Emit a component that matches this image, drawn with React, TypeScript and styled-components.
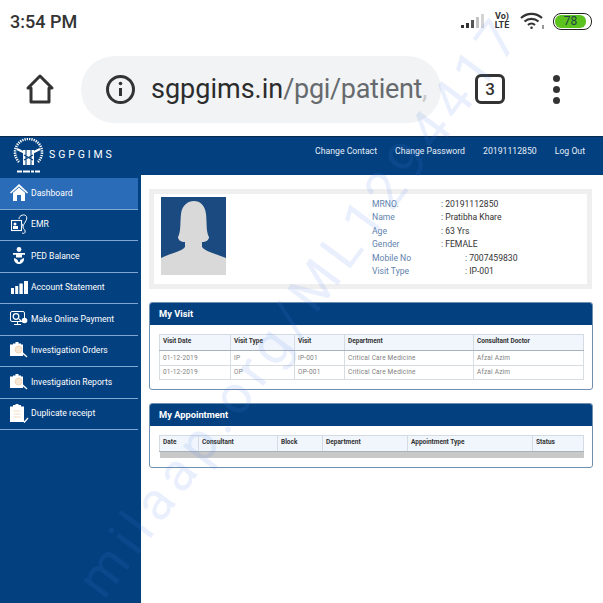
import styled, { createGlobalStyle } from "styled-components";

const navy = "#03407f";

const GlobalStyle = createGlobalStyle`
    html, body {
        margin: 0;
        padding: 0;
        background: #fff;
    }
    * {
        box-sizing: border-box;
    }
`;

const visitRows = [
    ["01-12-2019", "IP", "IP-001", "Critical Care Medicine", "Afzal Azim"],
    ["01-12-2019", "OP", "OP-001", "Critical Care Medicine", "Afzal Azim"],
];

const profile = [
    { label: "MRNO.", value: ": 20191112850", far: false },
    { label: "Name", value: ": Pratibha Khare", far: false },
    { label: "Age", value: ": 63 Yrs", far: false },
    { label: "Gender", value: ": FEMALE", far: false },
    { label: "Mobile No", value: ": 7007459830", far: true },
    { label: "Visit Type", value: ": IP-001", far: true },
];

const HomeIcon = () => (
    <svg width="18" height="17" viewBox="0 0 18 17">
        <path d="M9 0 L18 8.500 L17 9.500 L9 2.500 L1 9.500 L0 8.500 Z" fill="#fff" />
        <path d="M9 3.500 L15 8.800 V17 H11 V11 H7 V17 H3 V8.800 Z" fill="#fff" />
    </svg>
);
const EmrIcon = () => (
    <svg width="17" height="20" viewBox="0 0 17 20" fill="none" stroke="#fff">
        <rect x="0.500" y="6.500" width="10" height="10" strokeWidth="1.100" />
        <circle cx="4" cy="10" r="1.500" fill="#fff" stroke="none" />
        <rect x="2" y="12" width="5" height="3" fill="#fff" stroke="none" />
        <path d="M8 5C8 1 14-.5 15.500 2.500 17 6 12 10 12 13c0 2 3 3 2 5.500-.5 1-2 1-3 .5" strokeWidth="1" />
        <circle cx="11" cy="11" r="1.200" fill="#cfe0f4" stroke="none" />
    </svg>
);
const BabyIcon = () => (
    <svg width="12" height="17" viewBox="0 0 12 17" fill="#fff">
        <circle cx="6" cy="2.500" r="2.400" />
        <path d="M0 6h12v1.800H9V10.500H3V7.800H0z" />
        <path d="M1 11l2.300 1c.5 1.300 4.900 1.300 5.400 0l2.300-1c.4 3.500-2 6-5 6s-5.400-2.500-5-6z" />
        <circle cx="6" cy="13.800" r="1.200" fill="#03407f" />
    </svg>
);
const BarsIcon = () => (
    <svg width="17" height="13" viewBox="0 0 17 13" fill="#fff">
        <rect x="0" y="7" width="3" height="6" />
        <rect x="4.200" y="5" width="3" height="8" />
        <rect x="8.400" y="2.500" width="3.400" height="10.500" />
        <rect x="13" y="0" width="4" height="13" />
    </svg>
);
const PaymentIcon = () => (
    <svg width="19" height="15" viewBox="0 0 19 15" fill="none" stroke="#fff" strokeWidth="1">
        <rect x="0.500" y="0.500" width="14" height="10" rx="1.500" />
        <path d="M4 13.500h7M7.500 10.500v3" />
        <circle cx="6" cy="5.500" r="2.800" strokeWidth="1.300" />
        <circle cx="14.500" cy="9.500" r="2.800" fill="#fff" stroke="none" />
        <path d="M9 8l2 2" strokeWidth="1.300" />
    </svg>
);
const OrderIcon = () => (
    <svg width="18" height="16" viewBox="0 0 18 16">
        <path d="M0 2.500h3V1.500h2.500V0h3v1.500H11V2.500h2V14H0z" fill="#fff" />
        <circle cx="8.500" cy="7.500" r="3.500" fill="#f7e8d6" stroke="#e8d0b4" strokeWidth="0.800" />
        <path d="M11.500 10l5.500 5" stroke="#fff" strokeWidth="1.400" />
    </svg>
);
const ReceiptIcon = () => (
    <svg width="19" height="19" viewBox="0 0 19 19">
        <path d="M0 2.500h3V1h2.500V0h3v1H11v1.500h3V18H0z" fill="#fff" />
        <path d="M3.500 7h7M3.500 10h7M3.500 13h7" stroke="#f0dcc4" strokeWidth="1" />
        <path d="M13 16.500l1.500 1.500 3.500-4" fill="none" stroke="#fff" strokeWidth="1.200" />
    </svg>
);

const navItems = [
    { text: "Dashboard", icon: <HomeIcon /> },
    { text: "EMR", icon: <EmrIcon /> },
    { text: "PED Balance", icon: <BabyIcon /> },
    { text: "Account Statement", icon: <BarsIcon /> },
    { text: "Make Online Payment", icon: <PaymentIcon /> },
    { text: "Investigation Orders", icon: <OrderIcon /> },
    { text: "Investigation Reports", icon: <OrderIcon /> },
    { text: "Duplicate receipt", icon: <ReceiptIcon /> },
];

interface DataTableProps {
    widths: number[];
    heads: string[];
    rows?: string[][];
}

function DataTable({ widths, heads, rows }: DataTableProps) {
    return (
        <Table>
            <colgroup>
                {widths.map((w, i) => <col key={i} width={w} />)}
            </colgroup>
            <thead>
                <tr>{heads.map(h => <Th key={h}>{h}</Th>)}</tr>
            </thead>
            <tbody>
                {rows
                    ? rows.map((row, i) => (
                        <tr key={i}>{row.map((c, j) => <Td key={j}>{c}</Td>)}</tr>
                    ))
                    : <tr><EmptyCell colSpan={heads.length} /></tr>}
            </tbody>
        </Table>
    );
}

export default function App() {
    return (
        <Page>
            <GlobalStyle />
            <StatusBar>
                <Clock>3:54 PM</Clock>
                <StatusIcons>
                    <svg width="23" height="16" viewBox="0 0 23 16">
                        <rect x="0" y="12" width="3" height="3" fill="#333" />
                        <rect x="5" y="10" width="3" height="5" fill="#333" />
                        <rect x="10" y="7" width="3" height="8" fill="#555" />
                        <rect x="15" y="4" width="3" height="11" fill="#c4c4c4" />
                        <rect x="20" y="1" width="3" height="14" fill="#d4d4d4" />
                    </svg>
                    <NetBadge>Vo)<br />LTE</NetBadge>
                    <svg width="25" height="18" viewBox="0 0 25 18" fill="none" stroke="#333" strokeWidth="2.200">
                        <path d="M1 6c6-5.500 15-5.500 21 0" />
                        <path d="M4.500 9.500c4-3.500 10-3.500 14 0" />
                        <path d="M8 13c2-1.800 5-1.800 7 0" />
                        <circle cx="11.500" cy="15.800" r="1.300" fill="#333" stroke="none" />
                        <path d="M23 13v4" strokeWidth="1" />
                    </svg>
                    <Battery><BatteryFill>78</BatteryFill></Battery>
                </StatusIcons>
            </StatusBar>

            <BrowserBar>
                <svg width="30" height="32" viewBox="0 0 30 32" fill="none" stroke="#333" strokeWidth="3" strokeLinejoin="round">
                    <path d="M15 3 L27 15 H24 V29 H6 V15 H3 Z" />
                </svg>
                <UrlPill>
                    <svg width="31" height="31" viewBox="0 0 31 31" fill="none" stroke="#333">
                        <circle cx="15.500" cy="15.500" r="13" strokeWidth="3" />
                        <path d="M15.500 14v8" strokeWidth="3" />
                        <circle cx="15.500" cy="9.500" r="1.800" fill="#333" stroke="none" />
                    </svg>
                    <UrlText><strong>sgpgims.in</strong>/pgi/patient<em>,</em></UrlText>
                </UrlPill>
                <TabCount>3</TabCount>
                <MenuDots><i /><i /><i /></MenuDots>
            </BrowserBar>

            <Header>
                <Brand>
                    <svg width="31" height="36" viewBox="0 0 31 36" fill="none" stroke="#fff">
                        <path d="M6 24A13.500 13.500 0 1 1 25 24" strokeWidth="2.600" strokeDasharray="1.300 1" />
                        <path d="M4 11l7 3.500M27 11l-7 3.500" strokeWidth="2" />
                        <rect x="10" y="12" width="11" height="15" fill="#fff" stroke="none" />
                        <path d="M13 12v15M18 12v15M11 17l9 5M20 17l-9 5" stroke={navy} strokeWidth="1.100" />
                        <path d="M4 33.500h23" strokeWidth="2" strokeDasharray="5 1 7 1 3 1" />
                    </svg>
                    <BrandName>SGPGIMS</BrandName>
                </Brand>
                <HeaderLinks>
                    <span>Change Contact</span>
                    <span>Change Password</span>
                    <span>20191112850</span>
                    <span>Log Out</span>
                </HeaderLinks>
            </Header>

            <Body>
                <Sidebar>
                    {navItems.map((item, i) => (
                        <NavItem key={item.text} $active={i === 0}>
                            <NavIcon>{item.icon}</NavIcon>
                            {item.text}
                        </NavItem>
                    ))}
                </Sidebar>
                <Main>
                    <ProfileCard>
                        <Avatar>
                            <svg width="65" height="78" viewBox="0 0 65 78">
                                <rect width="65" height="78" fill="#1a4a7f" />
                                <path d="M0 61 C10 56 20 55 24 50 L24 45 C20 45 17 43 17 40 C20 35 19 26 20 17 C21 8 27 4 33 4 C39 4 44 8 45 17 C46 26 45 35 48 40 C48 43 45 45 41 45 L41 50 C45 55 56 57 65 61 L65 78 L0 78 Z" fill="#d9d9d9" />
                            </svg>
                        </Avatar>
                        <Details>
                            {profile.map(p => (
                                <DetailRow key={p.label}>
                                    <DetailLabel>{p.label}</DetailLabel>
                                    <DetailValue $far={p.far}>{p.value}</DetailValue>
                                </DetailRow>
                            ))}
                        </Details>
                    </ProfileCard>

                    <Panel>
                        <PanelTitle>My Visit</PanelTitle>
                        <PanelBody>
                            <DataTable
                                widths={[71, 64, 50, 129, 110]}
                                heads={["Visit Date", "Visit Type", "Visit", "Department", "Consultant Doctor"]}
                                rows={visitRows}
                            />
                        </PanelBody>
                    </Panel>

                    <Panel>
                        <PanelTitle>My Appointment</PanelTitle>
                        <PanelBody>
                            <DataTable
                                widths={[39, 79, 45, 85, 125, 51]}
                                heads={["Date", "Consultant", "Block", "Department", "Appointment Type", "Status"]}
                            />
                        </PanelBody>
                    </Panel>
                </Main>
            </Body>

            <Watermark>milaap.org/ML1294417</Watermark>
        </Page>
    );
}

const Page = styled.div`
    position: relative;
    width: 603px;
    height: 603px;
    overflow: hidden;
    display: flex;
    flex-direction: column;
    background: #fff;
    font-family: Roboto, "Liberation Sans", sans-serif;
`;

const StatusBar = styled.div`
    height: 44px;
    padding: 0 11px 2px 10px;
    display: flex;
    align-items: center;
    justify-content: space-between;
`;

const Clock = styled.div`
    font-size: 18px;
    font-weight: 500;
    color: #333;
`;

const StatusIcons = styled.div`
    display: flex;
    align-items: center;
    gap: 8px;
`;

const NetBadge = styled.div`
    width: 20px;
    font-size: 9px;
    line-height: 9px;
    font-weight: 700;
    color: #333;
    text-align: center;
`;

const Battery = styled.div`
    width: 39px;
    height: 17px;
    border: 1.500px solid #222;
    border-radius: 8px;
    padding: 1px;
`;

const BatteryFill = styled.div`
    width: 31px;
    height: 100%;
    border-radius: 6px;
    background: #5cc21e;
    color: #244;
    font-size: 12px;
    line-height: 12px;
    text-align: center;
`;

const BrowserBar = styled.div`
    height: 92px;
    padding: 0 0 2px 25px;
    display: flex;
    align-items: center;
`;

const UrlPill = styled.div`
    width: 360px;
    height: 67px;
    margin-left: 26px;
    padding-left: 24px;
    border-radius: 34px;
    background: #f1f3f4;
    display: flex;
    align-items: center;
    gap: 15px;
`;

const UrlText = styled.div`
    white-space: nowrap;
    font-size: 27px;
    letter-spacing: -0.3px;
    color: #666a6e;
    strong {
        font-weight: 400;
        letter-spacing: 0;
        color: #2c2c2c;
    }
    em {
        font-style: normal;
        color: #c8cacc;
    }
`;

const TabCount = styled.div`
    width: 30px;
    height: 30px;
    margin-left: 34px;
    border: 3px solid #333;
    border-radius: 6px;
    display: flex;
    align-items: center;
    justify-content: center;
    font-size: 17px;
    font-weight: 500;
    color: #333;
`;

const MenuDots = styled.div`
    margin-left: 48px;
    display: flex;
    flex-direction: column;
    gap: 4px;
    i {
        display: block;
        width: 7px;
        height: 7px;
        border-radius: 50%;
        background: #333;
    }
`;

const Header = styled.div`
    height: 39px;
    padding: 0 18px 10px 13px;
    flex-shrink: 0;
    display: flex;
    align-items: center;
    justify-content: space-between;
    background: ${navy};
    border-top: 1px solid #0a2a50;
`;

const Brand = styled.div`
    display: flex;
    align-items: center;
    gap: 5px;
    margin-bottom: -9px;
`;

const BrandName = styled.div`
    font-size: 10.500px;
    letter-spacing: 2.900px;
    color: #fff;
    margin-bottom: 3px;
`;

const HeaderLinks = styled.div`
    display: flex;
    gap: 18px;
    font-size: 8.700px;
    color: #e6eef8;
`;

const Body = styled.div`
    flex: 1;
    display: flex;
    min-height: 0;
`;

const Sidebar = styled.nav`
    width: 141px;
    padding-top: 3px;
    background: ${navy};
    flex-shrink: 0;
`;

const NavItem = styled.div<{ $active: boolean }>`
    height: 31.500px;
    margin-right: 3px;
    padding-bottom: 1px;
    display: flex;
    align-items: center;
    font-size: 8.600px;
    color: #fff;
    background: ${p => (p.$active ? "#2b6cb8" : "transparent")};
    border-bottom: 1px solid #7fa8d4;
`;

const NavIcon = styled.span`
    width: 31px;
    flex-shrink: 0;
    padding-left: 7px;
    display: flex;
    justify-content: center;
`;

const Main = styled.main`
    flex: 1;
    padding: 14px 10px 0 8px;
    display: flex;
    flex-direction: column;
    gap: 13px;
`;

const ProfileCard = styled.section`
    width: 443px;
    height: 100px;
    padding: 3px 0 0 7px;
    border: 5px solid #efefef;
    display: flex;
`;

const Avatar = styled.div`
    width: 65px;
    height: 78px;
    flex-shrink: 0;
    margin-right: 146px;
`;

const Details = styled.div`
    display: flex;
    flex-direction: column;
`;

const DetailRow = styled.div`
    height: 13.500px;
    display: flex;
    align-items: center;
    font-size: 8.600px;
`;

const DetailLabel = styled.span`
    width: 69px;
    color: #5f83ad;
`;

const DetailValue = styled.span<{ $far: boolean }>`
    color: #333;
    margin-left: ${p => (p.$far ? "24px" : "0")};
`;

const Panel = styled.section`
    width: 444px;
    border: 1px solid #6f8fae;
    border-radius: 3px;
    overflow: hidden;
`;

const PanelTitle = styled.h2`
    margin: 0;
    height: 22px;
    padding: 0 9px 2px;
    display: flex;
    align-items: center;
    font-size: 9.300px;
    font-weight: 700;
    color: #fff;
    background: ${navy};
`;

const PanelBody = styled.div`
    padding: 9px 9px 9px 9px;
`;

const Table = styled.table`
    width: 424px;
    table-layout: fixed;
    border-collapse: collapse;
    font-size: 6.500px;
`;

const Th = styled.th`
    height: 16px;
    padding: 0 3px 3px;
    text-align: left;
    font-weight: 700;
    color: #333;
    background: #f1f6fd;
    border: 1px solid #d4dbe3;
    border-bottom: 1px solid #a8b2bd;
`;

const Td = styled.td`
    height: 14.500px;
    padding: 0 3px;
    color: #808080;
    letter-spacing: 0.2px;
    border: 1px solid #d8dde2;
`;

const EmptyCell = styled.td`
    height: 6px;
    padding: 0;
    background: #c8c8c8;
`;

const Watermark = styled.div`
    position: absolute;
    left: -52px;
    top: 281px;
    width: 700px;
    transform: rotate(-53.500deg);
    font-size: 54px;
    line-height: 56px;
    letter-spacing: 7px;
    white-space: nowrap;
    color: rgba(70, 120, 230, 0.12);
    pointer-events: none;
`;
